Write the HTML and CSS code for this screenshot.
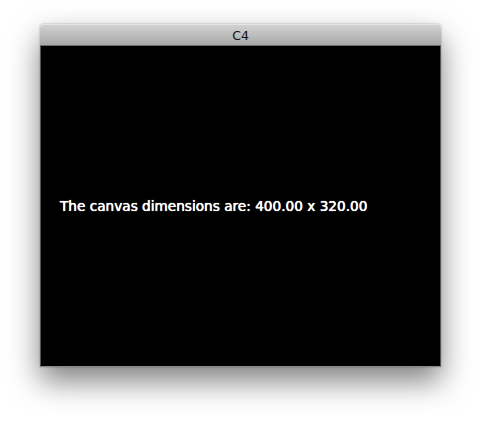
FILE: index.html
```html
<!DOCTYPE html>
<html>
<head>
<meta charset="utf-8">
<link rel="stylesheet" href="styles.css">
</head>
<body>
<div class="stage">
  <div class="window">
    <div class="titlebar">C4</div>
    <div class="canvas">
      <div class="msg">The canvas dimensions are: 400.00 x 320.00</div>
    </div>
  </div>
</div>
</body>
</html>
```
FILE: styles.css
```css
html, body {
  margin: 0;
  padding: 0;
  background: #ffffff;
}
body {
  min-height: 422px;
}
.stage {
  padding: 24px 0 0 40px;
  min-height: 422px;
  box-sizing: border-box;
}
.window {
  width: 401px;
  display: flex;
  flex-direction: column;
  border-radius: 4px 4px 0 0;
  box-shadow: 0 14px 30px rgba(0, 0, 0, 0.5), 0 0 2px rgba(0,0,0,0.35);
}
.titlebar {
  height: 21px;
  border-bottom: 1px solid #6e6e6e;
  border-radius: 4px 4px 0 0;
  background: linear-gradient(#d4d4d4, #a8a8a8);
  box-shadow: inset 0 1px 0 #e6e6e6;
  font-family: "DejaVu Sans", sans-serif;
  font-size: 12.5px;
  line-height: 24px;
  color: #111;
  text-align: center;
}
.canvas {
  height: 321px;
  background: #000;
  border-bottom: 1px solid #8a8a8a;
  border-left: 1px solid #555;
  border-right: 1px solid #555;
  box-sizing: border-box;
  padding: 151px 0 0 19px;
}
.msg {
  font-family: "DejaVu Sans", sans-serif;
  font-size: 13.65px;
  font-weight: normal;
  color: #ffffff;
  line-height: 18px;
  text-shadow: 0 0 1px #fff, 0 0 0.5px #fff;
}
```
